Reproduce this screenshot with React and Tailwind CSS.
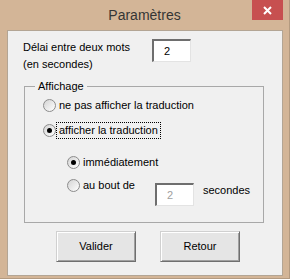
import React from 'react';

const Radio = ({ checked }) => (
    <div className="w-[13px] h-[13px] rounded-full border border-[#8c8c8c] bg-gradient-to-br from-[#d4d4d4] to-white flex items-center justify-center shrink-0">
        {checked && <div className="w-[5px] h-[5px] rounded-full bg-black"></div>}
    </div>
);

const Option = ({ checked, focused, label, className = '' }) => (
    <div className={`flex items-center h-[17px] ${className}`}>
        <Radio checked={checked} />
        <span className={`px-[2px] leading-[15px] border ${focused ? 'border-dotted border-black' : 'border-transparent'}`}>
            {label}
        </span>
    </div>
);

const Button = ({ children }) => (
    <button className="w-[80px] h-[31px] bg-[#e5e5e5] border border-t-[#d0d0d0] border-l-[#d0d0d0] border-r-[#6f6f6f] border-b-[#6f6f6f] shadow-[inset_1px_1px_0_#ffffff,inset_-1px_-1px_0_#a0a0a0] text-black">
        {children}
    </button>
);

export default function App() {
    return (
        <div className="w-[290px] h-[279px] bg-[#d3b597] border-r border-b border-[#b39a80] flex flex-col text-[11px] text-black font-['Liberation_Sans',Arial,sans-serif]">
            <div className="relative h-[30px] flex items-center justify-center">
                <span className="text-[14px] text-[#353535]">Paramètres</span>
                <div className="absolute top-0 right-[6px] w-[31px] h-[20px] bg-[#c75050] flex items-center justify-center">
                    <svg width="9" height="9" viewBox="0 0 9 9">
                        <path d="M1 1 L8 8 M8 1 L1 8" stroke="#ffffff" strokeWidth="2" />
                    </svg>
                </div>
            </div>

            <div className="ml-[7px] w-[276px] h-[246px] border border-[#b3a594] bg-[#f0f0f0] flex flex-col">
                <div className="flex mt-[8px] ml-[15px]">
                    <div className="w-[129px] leading-[17px]">
                        Délai entre deux mots<br />(en secondes)
                    </div>
                    <div className="w-[39px] h-[23px] bg-white border-t-2 border-l-2 border-[#6e6e6e] border-r border-b border-r-[#e3e3e3] border-b-[#e3e3e3] pl-[10px] flex items-center">
                        2
                    </div>
                </div>

                <fieldset className="ml-[16px] mt-[5px] w-[240px] h-[145px] border border-[#a8a8a8]">
                    <legend className="ml-[10px] px-[3px] leading-[17px]">Affichage</legend>
                    <div className="flex flex-col ml-[18px]">
                        <Option label="ne pas afficher la traduction" className="mt-[2px]" />
                        <Option label="afficher la traduction" checked focused className="mt-[8px]" />
                        <Option label="immédiatement" checked className="mt-[15px] ml-[24px]" />
                        <div className="flex items-start mt-[6px] ml-[24px]">
                            <div className="w-[88px] h-[17px] flex items-center">
                                <Radio />
                                <span className="px-[3px]">au bout de</span>
                            </div>
                            <div className="mt-[6px] w-[39px] h-[23px] bg-white border-t-2 border-l-2 border-[#6e6e6e] border-r border-b border-r-[#e3e3e3] border-b-[#e3e3e3] pl-[10px] flex items-center text-[#a0a0a0]">
                                2
                            </div>
                            <span className="ml-[9px] mt-[5px] leading-[17px]">secondes</span>
                        </div>
                    </div>
                </fieldset>

                <div className="flex gap-[24px] ml-[48px] mt-[8px]">
                    <Button>Valider</Button>
                    <Button>Retour</Button>
                </div>
            </div>
        </div>
    );
}
